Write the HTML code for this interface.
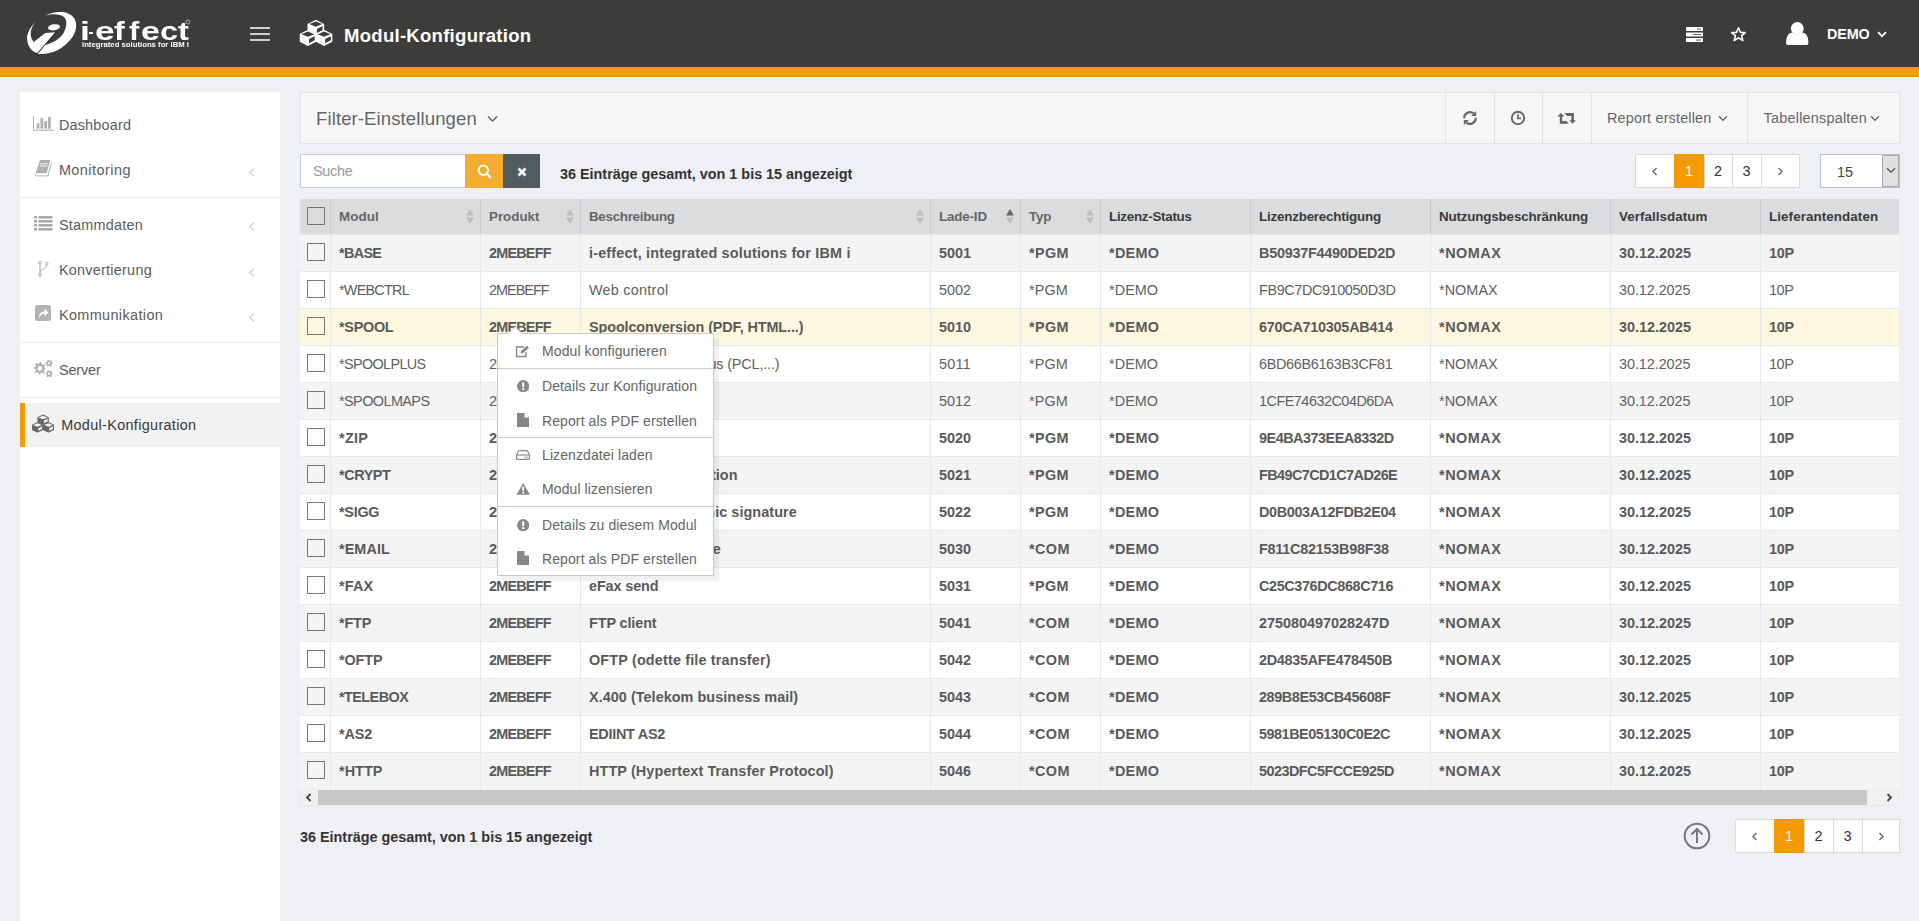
<!DOCTYPE html><html><head><meta charset="utf-8"><title>Modul-Konfiguration</title><style>
*{box-sizing:border-box;margin:0;padding:0}
html,body{width:1919px;height:921px;overflow:hidden;background:#eff0f3;font-family:"Liberation Sans",sans-serif;color:#555}
.t{position:absolute;white-space:nowrap}
.r{position:absolute;display:block}
</style></head><body>
<div class="r" style="left:0px;top:0px;width:1919px;height:67px;background:#3c3c3b;"></div>
<div class="r" style="left:0px;top:67px;width:1919px;height:10px;background:#f59b00;"></div>
<svg class="r" style="left:22px;top:8px;" width="60" height="50" viewBox="0 0 60 50"><path fill="#fff" d="M13.8 14.1 C 8 19, 4.5 26, 5.2 32 C 5.8 38, 9 42, 13 44.2 L 15.2 45 L 33.1 24.2 L 23.3 25 L 11.7 33.9 C 9 31, 8.4 27, 8.8 24 C 9.4 20, 11 17, 13.8 14.1 Z"/><path fill="#fff" d="M23.3 7.6 C 30 4, 40 3, 46 5.5 C 52 8, 55 13, 54 20 C 53 28, 46 36, 36 42 C 29 45.5, 20 46.5, 15.8 46 L 23.3 36.9 C 30 35.5, 38 31, 41.5 25 C 45 19, 45.5 12, 42 9 C 38 5.5, 30 5.5, 23.3 7.6 Z"/><ellipse fill="#fff" cx="32" cy="19.3" rx="6" ry="3" transform="rotate(-8 32 19.3)"/></svg>
<div class="t" style="left:79.9px;top:19px;font-size:25px;line-height:25px;font-weight:bold;color:#fff;transform-origin:0 0;transform:scaleX(1.43)">i</div>
<div class="t" style="left:95.1px;top:19px;font-size:25px;line-height:25px;font-weight:bold;color:#fff;transform-origin:0 0;transform:scaleX(1.41)">e</div>
<div class="t" style="left:114.1px;top:19px;font-size:25px;line-height:25px;font-weight:bold;color:#fff;transform-origin:0 0;transform:scaleX(1.3)">f</div>
<div class="t" style="left:129px;top:19px;font-size:25px;line-height:25px;font-weight:bold;color:#fff;transform-origin:0 0;transform:scaleX(1.23)">f</div>
<div class="t" style="left:140.7px;top:19px;font-size:25px;line-height:25px;font-weight:bold;color:#fff;transform-origin:0 0;transform:scaleX(1.36)">e</div>
<div class="t" style="left:159.7px;top:19px;font-size:25px;line-height:25px;font-weight:bold;color:#fff;transform-origin:0 0;transform:scaleX(1.3)">c</div>
<div class="t" style="left:177.9px;top:19px;font-size:25px;line-height:25px;font-weight:bold;color:#fff;transform-origin:0 0;transform:scaleX(1.31)">t</div>
<div class="r" style="left:89px;top:32px;width:4.2px;height:2px;background:#fff;"></div>
<svg class="r" style="left:185px;top:19px;" width="6" height="6" viewBox="0 0 6 6"><circle cx="3" cy="3" r="2" fill="none" stroke="#ddd" stroke-width="0.7"/></svg>
<div class="t" style="left:82px;top:41.50px;font-size:6.5px;line-height:6.5px;font-weight:bold;color:#fff;transform-origin:0 0;transform:scaleX(1.19)">integrated solutions for IBM i</div>
<div class="r" style="left:250px;top:27px;width:20px;height:2px;background:#cfcfcf;"></div>
<div class="r" style="left:250px;top:33px;width:20px;height:2px;background:#cfcfcf;"></div>
<div class="r" style="left:250px;top:39px;width:20px;height:2px;background:#cfcfcf;"></div>
<svg class="r" style="left:296px;top:16px;" width="40" height="34" viewBox="0 0 40 34"><polygon fill="#fff" points="19.80,3.70 28.10,7.90 28.10,15.60 19.80,19.80 11.50,15.60 11.50,7.90"/><polygon fill="#3c3c3b" points="19.80,5.50 26.27,8.10 19.80,10.70 13.33,8.10"/><polygon fill="#3c3c3b" points="20.90,12.94 26.60,10.06 26.60,14.16 20.90,17.04"/><polygon fill="#fff" points="11.90,13.80 20.10,18.00 20.10,25.70 11.90,29.90 3.70,25.70 3.70,18.00"/><polygon fill="#3c3c3b" points="11.90,15.60 18.30,18.20 11.90,20.80 5.50,18.20"/><polygon fill="#3c3c3b" points="13.00,23.04 18.60,20.17 18.60,24.27 13.00,27.14"/><polygon fill="#fff" points="28.10,13.80 36.30,18.00 36.30,25.70 28.10,29.90 19.90,25.70 19.90,18.00"/><polygon fill="#3c3c3b" points="28.10,15.60 34.50,18.20 28.10,20.80 21.70,18.20"/><polygon fill="#3c3c3b" points="29.20,23.04 34.80,20.17 34.80,24.27 29.20,27.14"/></svg>
<div class="t" style="left:344px;top:26.51px;font-size:18.54px;line-height:18.54px;font-weight:700;color:#fff;letter-spacing:0.271px;">Modul-Konfiguration</div>
<svg class="r" style="left:1686px;top:27px;" width="17" height="15" viewBox="0 0 17 15">
<rect x="0" y="0" width="17" height="4" rx="0.6" fill="#fff"/>
<rect x="0" y="5.5" width="17" height="4" rx="0.6" fill="#fff"/>
<rect x="0" y="11" width="17" height="4" rx="0.6" fill="#fff"/>
<rect x="11" y="1.6" width="4" height="0.9" fill="#555"/>
<rect x="7" y="7.1" width="8" height="0.9" fill="#555"/>
<rect x="10" y="12.6" width="5" height="0.9" fill="#555"/>
</svg>
<svg class="r" style="left:1730px;top:26px;" width="17" height="17" viewBox="0 0 24 24"><path fill="none" stroke="#fff" stroke-width="2.2" stroke-linejoin="round" d="M12 2.5 L14.8 9 L21.7 9.3 L16.3 13.7 L18.2 20.6 L12 16.7 L5.8 20.6 L7.7 13.7 L2.3 9.3 L9.2 9 Z"/></svg>
<svg class="r" style="left:1786px;top:21px;" width="23" height="25" viewBox="0 0 23 25">
<circle cx="11.3" cy="7.5" r="6.4" fill="#fff"/>
<path fill="#fff" d="M2 24 C0.2 24 0 22.5 0.2 20 C0.6 15 2.5 12 6.5 11.6 C8 13 9.5 13.6 11.3 13.6 C13.1 13.6 14.6 13 16 11.6 C20 12 22 15 22.3 20 C22.5 22.5 22.3 24 20.5 24 Z"/>
</svg>
<div class="t" style="left:1827px;top:27.09px;font-size:14.42px;line-height:14.42px;font-weight:700;color:#fff;letter-spacing:-0.168px;">DEMO</div>
<svg class="r" style="left:1877px;top:31px;" width="10" height="7" viewBox="0 0 10 7"><path d="M1 1.2 L5 5.2 L9 1.2" fill="none" stroke="#fff" stroke-width="1.8"/></svg>
<div class="r" style="left:20px;top:92px;width:260px;height:829px;background:#fff;"></div>
<div class="t" style="left:58.9px;top:118.09px;font-size:14.42px;line-height:14.42px;font-weight:400;color:#5c5c5c;letter-spacing:0.196px;">Dashboard</div>
<div class="t" style="left:58.9px;top:163.29px;font-size:14.42px;line-height:14.42px;font-weight:400;color:#5c5c5c;letter-spacing:0.473px;">Monitoring</div>
<svg class="r" style="left:248px;top:168.0px;" width="7" height="9" viewBox="0 0 7 9"><path d="M6 0.8 L1.5 4.5 L6 8.2" fill="none" stroke="#d0d0d0" stroke-width="1.2"/></svg>
<div class="t" style="left:58.9px;top:217.59px;font-size:14.42px;line-height:14.42px;font-weight:400;color:#5c5c5c;letter-spacing:0.247px;">Stammdaten</div>
<svg class="r" style="left:248px;top:222.3px;" width="7" height="9" viewBox="0 0 7 9"><path d="M6 0.8 L1.5 4.5 L6 8.2" fill="none" stroke="#d0d0d0" stroke-width="1.2"/></svg>
<div class="t" style="left:58.9px;top:263.29px;font-size:14.42px;line-height:14.42px;font-weight:400;color:#5c5c5c;letter-spacing:0.257px;">Konvertierung</div>
<svg class="r" style="left:248px;top:268.0px;" width="7" height="9" viewBox="0 0 7 9"><path d="M6 0.8 L1.5 4.5 L6 8.2" fill="none" stroke="#d0d0d0" stroke-width="1.2"/></svg>
<div class="t" style="left:58.9px;top:307.79px;font-size:14.42px;line-height:14.42px;font-weight:400;color:#5c5c5c;letter-spacing:0.385px;">Kommunikation</div>
<svg class="r" style="left:248px;top:312.5px;" width="7" height="9" viewBox="0 0 7 9"><path d="M6 0.8 L1.5 4.5 L6 8.2" fill="none" stroke="#d0d0d0" stroke-width="1.2"/></svg>
<div class="t" style="left:58.9px;top:362.79px;font-size:14.42px;line-height:14.42px;font-weight:400;color:#5c5c5c;letter-spacing:-0.099px;">Server</div>
<div class="r" style="left:20px;top:197px;width:260px;height:1px;background:#ebebeb;"></div>
<div class="r" style="left:20px;top:342px;width:260px;height:1px;background:#ebebeb;"></div>
<div class="r" style="left:20px;top:397px;width:260px;height:1px;background:#ebebeb;"></div>
<div class="r" style="left:20px;top:403px;width:260px;height:44px;background:#f2f2f2;"></div>
<div class="r" style="left:20px;top:403px;width:5px;height:44px;background:#f59b00;"></div>
<div class="t" style="left:61.2px;top:417.79px;font-size:14.42px;line-height:14.42px;font-weight:400;color:#383838;letter-spacing:0.332px;">Modul-Konfiguration</div>
<svg class="r" style="left:28px;top:110px;" width="30" height="25" viewBox="0 0 30 25"><g fill="#b0b0b0"><rect x="5" y="6" width="1" height="14.6"/><rect x="5" y="19.6" width="20.8" height="1.1"/><rect x="8.7" y="13.3" width="2.7" height="5.3"/><rect x="12.5" y="8" width="2.7" height="10.6"/><rect x="16.3" y="11" width="2.7" height="7.6"/><rect x="20.1" y="7" width="2.7" height="11.6"/></g></svg>
<svg class="r" style="left:28px;top:155px;" width="30" height="25" viewBox="0 0 30 25"><path d="M11.6 5.9 Q11.9 5.1 12.8 5.1 H21.4 Q22.3 5.1 22 6 L18.9 17.5 Q18.6 18.3 17.7 18.3 H8.6 Q7.7 18.3 7.9 17.5 Z" fill="#b0b0b0"/><path d="M12.2 8.8 H19.8 M11.8 11 H19.2" stroke="#fff" stroke-width="0.9"/><path d="M23.4 8.2 L20 20.3 Q19.8 20.9 19.1 20.9 H8.4 Q7.2 20.9 7.3 19.6 Q7.4 18.8 8.3 18.8" fill="none" stroke="#b0b0b0" stroke-width="1"/></svg>
<svg class="r" style="left:34px;top:215.6px;" width="19" height="15" viewBox="0 0 19 15">
<rect x="0" y="0" width="3" height="2.6" fill="#aaa"/><rect x="4.5" y="0" width="14" height="2.6" fill="#aaa"/>
<rect x="0" y="4" width="3" height="2.6" fill="#aaa"/><rect x="4.5" y="4" width="14" height="2.6" fill="#aaa"/>
<rect x="0" y="8" width="3" height="2.6" fill="#aaa"/><rect x="4.5" y="8" width="14" height="2.6" fill="#aaa"/>
<rect x="0" y="12" width="3" height="2.6" fill="#aaa"/><rect x="4.5" y="12" width="14" height="2.6" fill="#aaa"/>
</svg>
<svg class="r" style="left:36px;top:260px;" width="14" height="17" viewBox="0 0 14 17">
<circle cx="4" cy="2.6" r="1.4" fill="none" stroke="#aaa" stroke-width="1"/>
<circle cx="10.6" cy="3.7" r="1.4" fill="none" stroke="#aaa" stroke-width="1"/>
<circle cx="4" cy="15" r="1.4" fill="none" stroke="#aaa" stroke-width="1"/>
<path d="M4 4 V13.6 M10.6 5.1 C10.6 9 4.5 9 4 12" fill="none" stroke="#aaa" stroke-width="1"/>
</svg>
<svg class="r" style="left:35px;top:305px;" width="16" height="16" viewBox="0 0 16 16">
<rect x="0" y="0" width="16" height="16" rx="2.5" fill="#b4b4b4"/>
<path d="M4.2 13.2 C3.6 9 5.6 6.6 9.6 6.4 V3.8 L13.4 7.6 L9.6 11.4 V8.8 C7 8.8 5.2 10.2 4.2 13.2 Z" fill="#fff"/>
</svg>
<svg class="r" style="left:28px;top:355px;" width="30" height="30" viewBox="0 0 30 30"><circle cx="11.9" cy="13.4" r="3.55" fill="none" stroke="#b0b0b0" stroke-width="2.50"/><circle cx="11.9" cy="13.4" r="5.40" fill="none" stroke="#b0b0b0" stroke-width="2.00" stroke-dasharray="1.70 2.54" stroke-dashoffset="0.85"/><circle cx="21.2" cy="8.3" r="1.95" fill="none" stroke="#b0b0b0" stroke-width="1.70"/><circle cx="21.2" cy="8.3" r="3.10" fill="none" stroke="#b0b0b0" stroke-width="1.40" stroke-dasharray="1.20 2.05" stroke-dashoffset="0.60"/><circle cx="21.2" cy="18.7" r="1.95" fill="none" stroke="#b0b0b0" stroke-width="1.70"/><circle cx="21.2" cy="18.7" r="3.10" fill="none" stroke="#b0b0b0" stroke-width="1.40" stroke-dasharray="1.20 2.05" stroke-dashoffset="0.60"/></svg>
<svg class="r" style="left:28px;top:408px;" width="32" height="32" viewBox="0 0 32 32"><polygon fill="#686868" points="15.10,6.40 20.80,9.20 20.80,14.30 15.10,17.10 9.40,14.30 9.40,9.20"/><polygon fill="#f2f2f2" points="15.10,7.66 19.55,9.40 15.10,11.14 10.65,9.40"/><polygon fill="#f2f2f2" points="15.90,12.61 19.80,10.69 19.80,13.29 15.90,15.21"/><polygon fill="#686868" points="9.50,14.00 15.00,16.80 15.00,21.90 9.50,24.70 4.00,21.90 4.00,16.80"/><polygon fill="#f2f2f2" points="9.50,15.26 13.79,17.00 9.50,18.74 5.21,17.00"/><polygon fill="#f2f2f2" points="10.30,20.19 14.00,18.31 14.00,20.91 10.30,22.79"/><polygon fill="#686868" points="20.50,14.00 26.00,16.80 26.00,21.90 20.50,24.70 15.00,21.90 15.00,16.80"/><polygon fill="#f2f2f2" points="20.50,15.26 24.79,17.00 20.50,18.74 16.21,17.00"/><polygon fill="#f2f2f2" points="21.30,20.19 25.00,18.31 25.00,20.91 21.30,22.79"/></svg>
<div class="r" style="left:300px;top:92px;width:1600px;height:52px;background:#f7f7f7;border:1px solid #e4e4e4"></div>
<div class="t" style="left:316px;top:109.81px;font-size:18.54px;line-height:18.54px;font-weight:400;color:#666;letter-spacing:0.110px;">Filter-Einstellungen</div>
<svg class="r" style="left:487px;top:115px;" width="11" height="8" viewBox="0 0 11 8"><path d="M1 1.5 L5.5 6 L10 1.5" fill="none" stroke="#666" stroke-width="1.5"/></svg>
<div class="r" style="left:1445px;top:92px;width:1px;height:52px;background:#e4e4e4;"></div>
<div class="r" style="left:1494px;top:92px;width:1px;height:52px;background:#e4e4e4;"></div>
<div class="r" style="left:1542px;top:92px;width:1px;height:52px;background:#e4e4e4;"></div>
<div class="r" style="left:1591px;top:92px;width:1px;height:52px;background:#e4e4e4;"></div>
<div class="r" style="left:1747px;top:92px;width:1px;height:52px;background:#e4e4e4;"></div>
<svg class="r" style="left:1458px;top:106px;" width="24" height="24" viewBox="0 0 24 24"><path d="M6.2 12.2 A5.8 5.8 0 0 1 15.6 7.4" fill="none" stroke="#666" stroke-width="2.1"/><path d="M18.2 4.9 V10 H13.1 Z" fill="#666"/><path d="M17.8 11.8 A5.8 5.8 0 0 1 8.4 16.6" fill="none" stroke="#666" stroke-width="2.1"/><path d="M5.8 14 H10.9 L5.8 19.1 Z" fill="#666"/></svg>
<svg class="r" style="left:1510px;top:110px;" width="16" height="16" viewBox="0 0 16 16">
<circle cx="8" cy="8" r="6.2" fill="none" stroke="#666" stroke-width="1.9"/>
<path d="M8 4.2 V8.4 H11" fill="none" stroke="#666" stroke-width="1.7"/>
</svg>
<svg class="r" style="left:1552px;top:106px;" width="30" height="24" viewBox="0 0 30 24"><path d="M5.2 10.4 L8.9 7 L12.5 10.4 H10.2 V15.1 H14.3 L16.9 17.7 H7.8 V10.4 Z" fill="#666"/><path d="M12.2 7 H21.9 V14.3 H24 L20.6 17.7 L17.2 14.3 H19.3 V9.9 H15.1 Z" fill="#666"/></svg>
<div class="t" style="left:1607px;top:111.09px;font-size:14.42px;line-height:14.42px;font-weight:400;color:#666;letter-spacing:0.173px;">Report erstellen</div>
<svg class="r" style="left:1718px;top:115px;" width="10" height="7" viewBox="0 0 10 7"><path d="M1 1.2 L5 5.2 L9 1.2" fill="none" stroke="#666" stroke-width="1.4"/></svg>
<div class="t" style="left:1763.6px;top:111.09px;font-size:14.42px;line-height:14.42px;font-weight:400;color:#666;letter-spacing:0.220px;">Tabellenspalten</div>
<svg class="r" style="left:1870px;top:115px;" width="10" height="7" viewBox="0 0 10 7"><path d="M1 1.2 L5 5.2 L9 1.2" fill="none" stroke="#666" stroke-width="1.4"/></svg>
<div class="r" style="left:300px;top:154px;width:166px;height:34px;background:#fff;border:1px solid #c6cddc"></div>
<div class="t" style="left:313px;top:164.04px;font-size:14.42px;line-height:14.42px;font-weight:400;color:#999;letter-spacing:-0.287px;">Suche</div>
<div class="r" style="left:465px;top:154px;width:38px;height:34px;background:#f5ad31;"></div>
<svg class="r" style="left:477px;top:164px;" width="16" height="16" viewBox="0 0 16 16"><circle cx="6.3" cy="6.3" r="4.7" fill="none" stroke="#fff" stroke-width="2"/><path d="M9.8 9.8 L13.3 13.3" stroke="#fff" stroke-width="2.4" stroke-linecap="round"/></svg>
<div class="r" style="left:503px;top:154px;width:37px;height:34px;background:#505b62;"></div>
<svg class="r" style="left:516.5px;top:166.5px;" width="10" height="10" viewBox="0 0 10 10"><path d="M1.5 1.5 L8.5 8.5 M8.5 1.5 L1.5 8.5" stroke="#fff" stroke-width="2.6"/></svg>
<div class="t" style="left:560px;top:166.79px;font-size:14.42px;line-height:14.42px;font-weight:700;color:#333;letter-spacing:-0.015px;">36 Einträge gesamt, von 1 bis 15 angezeigt</div>
<div class="r" style="left:1635px;top:154px;width:165px;height:34px;background:#fff;border:1px solid #dadada"></div>
<svg class="r" style="left:1651px;top:167px;" width="7" height="9" viewBox="0 0 7 9"><path d="M5.5 1 L2 4.5 L5.5 8" fill="none" stroke="#606060" stroke-width="1.25"/></svg>
<div class="r" style="left:1674px;top:154px;width:1px;height:34px;background:#dadada;"></div>
<div class="r" style="left:1674px;top:154px;width:30px;height:34px;background:#f59b00;"></div>
<div class="t" style="left:1674px;width:30px;text-align:center;top:164.23px;font-size:14.5px;line-height:14.5px;color:#fff">1</div>
<div class="r" style="left:1704px;top:154px;width:1px;height:34px;background:#dadada;"></div>
<div class="t" style="left:1704px;width:28px;text-align:center;top:164.23px;font-size:14.5px;line-height:14.5px;color:#333">2</div>
<div class="r" style="left:1732px;top:154px;width:1px;height:34px;background:#dadada;"></div>
<div class="t" style="left:1732px;width:29px;text-align:center;top:164.23px;font-size:14.5px;line-height:14.5px;color:#333">3</div>
<div class="r" style="left:1761px;top:154px;width:1px;height:34px;background:#dadada;"></div>
<svg class="r" style="left:1777px;top:167px;" width="7" height="9" viewBox="0 0 7 9"><path d="M1.5 1 L5 4.5 L1.5 8" fill="none" stroke="#606060" stroke-width="1.25"/></svg>
<div class="r" style="left:1820px;top:154px;width:80px;height:34px;background:#fff;border:1px solid #b9c1d3"></div>
<div class="r" style="left:1882px;top:155px;width:17px;height:32px;background:#e0e0e0;border:1px solid #a9a9a9"></div>
<svg class="r" style="left:1886px;top:167px;" width="10" height="7" viewBox="0 0 10 7"><path d="M1 1.2 L5 5.2 L9 1.2" fill="none" stroke="#555" stroke-width="1.3"/></svg>
<div class="t" style="left:1837px;top:164.79px;font-size:14.42px;line-height:14.42px;font-weight:400;color:#444;letter-spacing:-0.008px;">15</div>
<div class="t" style="left:300px;top:829.59px;font-size:14.42px;line-height:14.42px;font-weight:700;color:#333;letter-spacing:-0.015px;">36 Einträge gesamt, von 1 bis 15 angezeigt</div>
<svg class="r" style="left:1683px;top:822px;" width="28" height="28" viewBox="0 0 28 28"><circle cx="14" cy="14" r="12.3" fill="none" stroke="#777" stroke-width="2"/><path d="M14 21 V7.5 M8.5 12.5 L14 7 L19.5 12.5" fill="none" stroke="#777" stroke-width="2"/></svg>
<div class="r" style="left:1735px;top:819px;width:165px;height:34px;background:#fff;border:1px solid #dadada"></div>
<svg class="r" style="left:1751px;top:832px;" width="7" height="9" viewBox="0 0 7 9"><path d="M5.5 1 L2 4.5 L5.5 8" fill="none" stroke="#606060" stroke-width="1.25"/></svg>
<div class="r" style="left:1774px;top:819px;width:1px;height:34px;background:#dadada;"></div>
<div class="r" style="left:1774px;top:819px;width:30px;height:34px;background:#f59b00;"></div>
<div class="t" style="left:1774px;width:30px;text-align:center;top:829.23px;font-size:14.5px;line-height:14.5px;color:#fff">1</div>
<div class="r" style="left:1804px;top:819px;width:1px;height:34px;background:#dadada;"></div>
<div class="t" style="left:1804px;width:29px;text-align:center;top:829.23px;font-size:14.5px;line-height:14.5px;color:#333">2</div>
<div class="r" style="left:1833px;top:819px;width:1px;height:34px;background:#dadada;"></div>
<div class="t" style="left:1833px;width:29px;text-align:center;top:829.23px;font-size:14.5px;line-height:14.5px;color:#333">3</div>
<div class="r" style="left:1862px;top:819px;width:1px;height:34px;background:#dadada;"></div>
<svg class="r" style="left:1878px;top:832px;" width="7" height="9" viewBox="0 0 7 9"><path d="M1.5 1 L5 4.5 L1.5 8" fill="none" stroke="#606060" stroke-width="1.25"/></svg>
<div class="r" style="left:300px;top:199px;width:1599px;height:35px;background:#dbdcde;"></div>
<div class="r" style="left:330px;top:199px;width:1px;height:35px;background:#c9cacd;"></div>
<div class="t" style="left:339px;top:209.67px;font-size:13.39px;line-height:13.39px;font-weight:700;color:#666;letter-spacing:0.103px;">Modul</div>
<svg class="r" style="left:466px;top:209px;" width="8" height="15" viewBox="0 0 8 15"><path d="M4 0 L8 6.5 H0 Z" fill="#bdbdbd"/><path d="M4 15 L8 8.5 H0 Z" fill="#bdbdbd"/></svg>
<div class="r" style="left:480px;top:199px;width:1px;height:35px;background:#c9cacd;"></div>
<div class="t" style="left:489px;top:209.67px;font-size:13.39px;line-height:13.39px;font-weight:700;color:#666;letter-spacing:-0.007px;">Produkt</div>
<svg class="r" style="left:566px;top:209px;" width="8" height="15" viewBox="0 0 8 15"><path d="M4 0 L8 6.5 H0 Z" fill="#bdbdbd"/><path d="M4 15 L8 8.5 H0 Z" fill="#bdbdbd"/></svg>
<div class="r" style="left:580px;top:199px;width:1px;height:35px;background:#c9cacd;"></div>
<div class="t" style="left:589px;top:209.67px;font-size:13.39px;line-height:13.39px;font-weight:700;color:#666;letter-spacing:-0.294px;">Beschreibung</div>
<svg class="r" style="left:916px;top:209px;" width="8" height="15" viewBox="0 0 8 15"><path d="M4 0 L8 6.5 H0 Z" fill="#bdbdbd"/><path d="M4 15 L8 8.5 H0 Z" fill="#bdbdbd"/></svg>
<div class="r" style="left:930px;top:199px;width:1px;height:35px;background:#c9cacd;"></div>
<div class="t" style="left:939px;top:209.67px;font-size:13.39px;line-height:13.39px;font-weight:700;color:#666;letter-spacing:-0.167px;">Lade-ID</div>
<svg class="r" style="left:1006px;top:209px;" width="8" height="15" viewBox="0 0 8 15"><path d="M4 0 L8 6.5 H0 Z" fill="#666"/><path d="M4 15 L8 8.5 H0 Z" fill="#bdbdbd"/></svg>
<div class="r" style="left:1020px;top:199px;width:1px;height:35px;background:#c9cacd;"></div>
<div class="t" style="left:1029px;top:209.67px;font-size:13.39px;line-height:13.39px;font-weight:700;color:#666;letter-spacing:-0.130px;">Typ</div>
<svg class="r" style="left:1086px;top:209px;" width="8" height="15" viewBox="0 0 8 15"><path d="M4 0 L8 6.5 H0 Z" fill="#bdbdbd"/><path d="M4 15 L8 8.5 H0 Z" fill="#bdbdbd"/></svg>
<div class="r" style="left:1100px;top:199px;width:1px;height:35px;background:#c9cacd;"></div>
<div class="t" style="left:1109px;top:209.67px;font-size:13.39px;line-height:13.39px;font-weight:700;color:#3a3a3a;letter-spacing:-0.275px;">Lizenz-Status</div>
<div class="r" style="left:1250px;top:199px;width:1px;height:35px;background:#c9cacd;"></div>
<div class="t" style="left:1259px;top:209.67px;font-size:13.39px;line-height:13.39px;font-weight:700;color:#3a3a3a;letter-spacing:-0.201px;">Lizenzberechtigung</div>
<div class="r" style="left:1430px;top:199px;width:1px;height:35px;background:#c9cacd;"></div>
<div class="t" style="left:1439px;top:209.67px;font-size:13.39px;line-height:13.39px;font-weight:700;color:#3a3a3a;letter-spacing:-0.164px;">Nutzungsbeschränkung</div>
<div class="r" style="left:1610px;top:199px;width:1px;height:35px;background:#c9cacd;"></div>
<div class="t" style="left:1619px;top:209.67px;font-size:13.39px;line-height:13.39px;font-weight:700;color:#3a3a3a;letter-spacing:0.058px;">Verfallsdatum</div>
<div class="r" style="left:1760px;top:199px;width:1px;height:35px;background:#c9cacd;"></div>
<div class="t" style="left:1769px;top:209.67px;font-size:13.39px;line-height:13.39px;font-weight:700;color:#3a3a3a;letter-spacing:0.090px;">Lieferantendaten</div>
<div class="r" style="left:307px;top:207px;width:18px;height:18px;background:transparent;border:1px solid #777;background:#dbdcde"></div>
<div class="r" style="left:300px;top:234px;width:1599px;height:37px;background:#f4f4f4;"></div>
<div class="r" style="left:300px;top:234px;width:1599px;height:1px;background:#e6e9ee;"></div>
<div class="r" style="left:330px;top:234px;width:1px;height:37px;background:#e6e9ee;"></div>
<div class="r" style="left:480px;top:234px;width:1px;height:37px;background:#e6e9ee;"></div>
<div class="r" style="left:580px;top:234px;width:1px;height:37px;background:#e6e9ee;"></div>
<div class="r" style="left:930px;top:234px;width:1px;height:37px;background:#e6e9ee;"></div>
<div class="r" style="left:1020px;top:234px;width:1px;height:37px;background:#e6e9ee;"></div>
<div class="r" style="left:1100px;top:234px;width:1px;height:37px;background:#e6e9ee;"></div>
<div class="r" style="left:1250px;top:234px;width:1px;height:37px;background:#e6e9ee;"></div>
<div class="r" style="left:1430px;top:234px;width:1px;height:37px;background:#e6e9ee;"></div>
<div class="r" style="left:1610px;top:234px;width:1px;height:37px;background:#e6e9ee;"></div>
<div class="r" style="left:1760px;top:234px;width:1px;height:37px;background:#e6e9ee;"></div>
<div class="r" style="left:307px;top:243px;width:18px;height:18px;background:transparent;border:1px solid #777"></div>
<div class="t" style="left:339px;top:245.79px;font-size:14.42px;line-height:14.42px;font-weight:700;color:#5a5a5a;letter-spacing:-0.678px;">*BASE</div>
<div class="t" style="left:489px;top:245.79px;font-size:14.42px;line-height:14.42px;font-weight:700;color:#5a5a5a;letter-spacing:-0.795px;">2MEBEFF</div>
<div class="t" style="left:589px;top:245.79px;font-size:14.42px;line-height:14.42px;font-weight:700;color:#5a5a5a;letter-spacing:0.177px;">i-effect, integrated solutions for IBM i</div>
<div class="t" style="left:939px;top:245.79px;font-size:14.42px;line-height:14.42px;font-weight:700;color:#5a5a5a;letter-spacing:-0.008px;">5001</div>
<div class="t" style="left:1029px;top:245.79px;font-size:14.42px;line-height:14.42px;font-weight:700;color:#5a5a5a;letter-spacing:0.336px;">*PGM</div>
<div class="t" style="left:1109px;top:245.79px;font-size:14.42px;line-height:14.42px;font-weight:700;color:#5a5a5a;letter-spacing:0.272px;">*DEMO</div>
<div class="t" style="left:1259px;top:245.79px;font-size:14.42px;line-height:14.42px;font-weight:700;color:#5a5a5a;letter-spacing:-0.255px;">B50937F4490DED2D</div>
<div class="t" style="left:1439px;top:245.79px;font-size:14.42px;line-height:14.42px;font-weight:700;color:#5a5a5a;letter-spacing:0.521px;">*NOMAX</div>
<div class="t" style="left:1619px;top:245.79px;font-size:14.42px;line-height:14.42px;font-weight:700;color:#5a5a5a;letter-spacing:-0.008px;">30.12.2025</div>
<div class="t" style="left:1769px;top:245.79px;font-size:14.42px;line-height:14.42px;font-weight:700;color:#5a5a5a;letter-spacing:-0.276px;">10P</div>
<div class="r" style="left:300px;top:271px;width:1599px;height:37px;background:#ffffff;"></div>
<div class="r" style="left:300px;top:271px;width:1599px;height:1px;background:#e6e9ee;"></div>
<div class="r" style="left:330px;top:271px;width:1px;height:37px;background:#e6e9ee;"></div>
<div class="r" style="left:480px;top:271px;width:1px;height:37px;background:#e6e9ee;"></div>
<div class="r" style="left:580px;top:271px;width:1px;height:37px;background:#e6e9ee;"></div>
<div class="r" style="left:930px;top:271px;width:1px;height:37px;background:#e6e9ee;"></div>
<div class="r" style="left:1020px;top:271px;width:1px;height:37px;background:#e6e9ee;"></div>
<div class="r" style="left:1100px;top:271px;width:1px;height:37px;background:#e6e9ee;"></div>
<div class="r" style="left:1250px;top:271px;width:1px;height:37px;background:#e6e9ee;"></div>
<div class="r" style="left:1430px;top:271px;width:1px;height:37px;background:#e6e9ee;"></div>
<div class="r" style="left:1610px;top:271px;width:1px;height:37px;background:#e6e9ee;"></div>
<div class="r" style="left:1760px;top:271px;width:1px;height:37px;background:#e6e9ee;"></div>
<div class="r" style="left:307px;top:280px;width:18px;height:18px;background:transparent;border:1px solid #777"></div>
<div class="t" style="left:339px;top:282.79px;font-size:14.42px;line-height:14.42px;font-weight:400;color:#616161;letter-spacing:-0.762px;">*WEBCTRL</div>
<div class="t" style="left:489px;top:282.79px;font-size:14.42px;line-height:14.42px;font-weight:400;color:#616161;letter-spacing:-0.971px;">2MEBEFF</div>
<div class="t" style="left:589px;top:282.79px;font-size:14.42px;line-height:14.42px;font-weight:400;color:#616161;letter-spacing:0.251px;">Web control</div>
<div class="t" style="left:939px;top:282.79px;font-size:14.42px;line-height:14.42px;font-weight:400;color:#616161;letter-spacing:-0.008px;">5002</div>
<div class="t" style="left:1029px;top:282.79px;font-size:14.42px;line-height:14.42px;font-weight:400;color:#616161;letter-spacing:0.121px;">*PGM</div>
<div class="t" style="left:1109px;top:282.79px;font-size:14.42px;line-height:14.42px;font-weight:400;color:#616161;letter-spacing:0.062px;">*DEMO</div>
<div class="t" style="left:1259px;top:282.79px;font-size:14.42px;line-height:14.42px;font-weight:400;color:#616161;letter-spacing:-0.382px;">FB9C7DC910050D3D</div>
<div class="t" style="left:1439px;top:282.79px;font-size:14.42px;line-height:14.42px;font-weight:400;color:#616161;letter-spacing:0.042px;">*NOMAX</div>
<div class="t" style="left:1619px;top:282.79px;font-size:14.42px;line-height:14.42px;font-weight:400;color:#616161;letter-spacing:-0.070px;">30.12.2025</div>
<div class="t" style="left:1769px;top:282.79px;font-size:14.42px;line-height:14.42px;font-weight:400;color:#616161;letter-spacing:-0.401px;">10P</div>
<div class="r" style="left:300px;top:308px;width:1599px;height:37px;background:#fef8e1;"></div>
<div class="r" style="left:300px;top:308px;width:1599px;height:1px;background:#e6e9ee;"></div>
<div class="r" style="left:330px;top:308px;width:1px;height:37px;background:#e6e9ee;"></div>
<div class="r" style="left:480px;top:308px;width:1px;height:37px;background:#e6e9ee;"></div>
<div class="r" style="left:580px;top:308px;width:1px;height:37px;background:#e6e9ee;"></div>
<div class="r" style="left:930px;top:308px;width:1px;height:37px;background:#e6e9ee;"></div>
<div class="r" style="left:1020px;top:308px;width:1px;height:37px;background:#e6e9ee;"></div>
<div class="r" style="left:1100px;top:308px;width:1px;height:37px;background:#e6e9ee;"></div>
<div class="r" style="left:1250px;top:308px;width:1px;height:37px;background:#e6e9ee;"></div>
<div class="r" style="left:1430px;top:308px;width:1px;height:37px;background:#e6e9ee;"></div>
<div class="r" style="left:1610px;top:308px;width:1px;height:37px;background:#e6e9ee;"></div>
<div class="r" style="left:1760px;top:308px;width:1px;height:37px;background:#e6e9ee;"></div>
<div class="r" style="left:307px;top:317px;width:18px;height:18px;background:transparent;border:1px solid #777"></div>
<div class="t" style="left:339px;top:319.79px;font-size:14.42px;line-height:14.42px;font-weight:700;color:#5a5a5a;letter-spacing:-0.286px;">*SPOOL</div>
<div class="t" style="left:489px;top:319.79px;font-size:14.42px;line-height:14.42px;font-weight:700;color:#5a5a5a;letter-spacing:-0.795px;">2MEBEFF</div>
<div class="t" style="left:589px;top:319.79px;font-size:14.42px;line-height:14.42px;font-weight:700;color:#5a5a5a;letter-spacing:-0.109px;">Spoolconversion (PDF, HTML...)</div>
<div class="t" style="left:939px;top:319.79px;font-size:14.42px;line-height:14.42px;font-weight:700;color:#5a5a5a;letter-spacing:-0.008px;">5010</div>
<div class="t" style="left:1029px;top:319.79px;font-size:14.42px;line-height:14.42px;font-weight:700;color:#5a5a5a;letter-spacing:0.336px;">*PGM</div>
<div class="t" style="left:1109px;top:319.79px;font-size:14.42px;line-height:14.42px;font-weight:700;color:#5a5a5a;letter-spacing:0.272px;">*DEMO</div>
<div class="t" style="left:1259px;top:319.79px;font-size:14.42px;line-height:14.42px;font-weight:700;color:#5a5a5a;letter-spacing:-0.253px;">670CA710305AB414</div>
<div class="t" style="left:1439px;top:319.79px;font-size:14.42px;line-height:14.42px;font-weight:700;color:#5a5a5a;letter-spacing:0.521px;">*NOMAX</div>
<div class="t" style="left:1619px;top:319.79px;font-size:14.42px;line-height:14.42px;font-weight:700;color:#5a5a5a;letter-spacing:-0.008px;">30.12.2025</div>
<div class="t" style="left:1769px;top:319.79px;font-size:14.42px;line-height:14.42px;font-weight:700;color:#5a5a5a;letter-spacing:-0.276px;">10P</div>
<div class="r" style="left:300px;top:345px;width:1599px;height:37px;background:#ffffff;"></div>
<div class="r" style="left:300px;top:345px;width:1599px;height:1px;background:#e6e9ee;"></div>
<div class="r" style="left:330px;top:345px;width:1px;height:37px;background:#e6e9ee;"></div>
<div class="r" style="left:480px;top:345px;width:1px;height:37px;background:#e6e9ee;"></div>
<div class="r" style="left:580px;top:345px;width:1px;height:37px;background:#e6e9ee;"></div>
<div class="r" style="left:930px;top:345px;width:1px;height:37px;background:#e6e9ee;"></div>
<div class="r" style="left:1020px;top:345px;width:1px;height:37px;background:#e6e9ee;"></div>
<div class="r" style="left:1100px;top:345px;width:1px;height:37px;background:#e6e9ee;"></div>
<div class="r" style="left:1250px;top:345px;width:1px;height:37px;background:#e6e9ee;"></div>
<div class="r" style="left:1430px;top:345px;width:1px;height:37px;background:#e6e9ee;"></div>
<div class="r" style="left:1610px;top:345px;width:1px;height:37px;background:#e6e9ee;"></div>
<div class="r" style="left:1760px;top:345px;width:1px;height:37px;background:#e6e9ee;"></div>
<div class="r" style="left:307px;top:354px;width:18px;height:18px;background:transparent;border:1px solid #777"></div>
<div class="t" style="left:339px;top:356.79px;font-size:14.42px;line-height:14.42px;font-weight:400;color:#616161;letter-spacing:-0.637px;">*SPOOLPLUS</div>
<div class="t" style="left:489px;top:356.79px;font-size:14.42px;line-height:14.42px;font-weight:400;color:#616161;letter-spacing:-0.971px;">2MEBEFF</div>
<div class="t" style="right:1139.5px;top:356.79px;font-size:14.42px;line-height:14.42px;font-weight:400;color:#616161;letter-spacing:-0.145px;">Spoolconversion plus (PCL,...)</div>
<div class="t" style="left:939px;top:356.79px;font-size:14.42px;line-height:14.42px;font-weight:400;color:#616161;letter-spacing:0.262px;">5011</div>
<div class="t" style="left:1029px;top:356.79px;font-size:14.42px;line-height:14.42px;font-weight:400;color:#616161;letter-spacing:0.121px;">*PGM</div>
<div class="t" style="left:1109px;top:356.79px;font-size:14.42px;line-height:14.42px;font-weight:400;color:#616161;letter-spacing:0.062px;">*DEMO</div>
<div class="t" style="left:1259px;top:356.79px;font-size:14.42px;line-height:14.42px;font-weight:400;color:#616161;letter-spacing:-0.323px;">6BD66B6163B3CF81</div>
<div class="t" style="left:1439px;top:356.79px;font-size:14.42px;line-height:14.42px;font-weight:400;color:#616161;letter-spacing:0.042px;">*NOMAX</div>
<div class="t" style="left:1619px;top:356.79px;font-size:14.42px;line-height:14.42px;font-weight:400;color:#616161;letter-spacing:-0.070px;">30.12.2025</div>
<div class="t" style="left:1769px;top:356.79px;font-size:14.42px;line-height:14.42px;font-weight:400;color:#616161;letter-spacing:-0.401px;">10P</div>
<div class="r" style="left:300px;top:382px;width:1599px;height:37px;background:#f4f4f4;"></div>
<div class="r" style="left:300px;top:382px;width:1599px;height:1px;background:#e6e9ee;"></div>
<div class="r" style="left:330px;top:382px;width:1px;height:37px;background:#e6e9ee;"></div>
<div class="r" style="left:480px;top:382px;width:1px;height:37px;background:#e6e9ee;"></div>
<div class="r" style="left:580px;top:382px;width:1px;height:37px;background:#e6e9ee;"></div>
<div class="r" style="left:930px;top:382px;width:1px;height:37px;background:#e6e9ee;"></div>
<div class="r" style="left:1020px;top:382px;width:1px;height:37px;background:#e6e9ee;"></div>
<div class="r" style="left:1100px;top:382px;width:1px;height:37px;background:#e6e9ee;"></div>
<div class="r" style="left:1250px;top:382px;width:1px;height:37px;background:#e6e9ee;"></div>
<div class="r" style="left:1430px;top:382px;width:1px;height:37px;background:#e6e9ee;"></div>
<div class="r" style="left:1610px;top:382px;width:1px;height:37px;background:#e6e9ee;"></div>
<div class="r" style="left:1760px;top:382px;width:1px;height:37px;background:#e6e9ee;"></div>
<div class="r" style="left:307px;top:391px;width:18px;height:18px;background:transparent;border:1px solid #777"></div>
<div class="t" style="left:339px;top:393.79px;font-size:14.42px;line-height:14.42px;font-weight:400;color:#616161;letter-spacing:-0.562px;">*SPOOLMAPS</div>
<div class="t" style="left:489px;top:393.79px;font-size:14.42px;line-height:14.42px;font-weight:400;color:#616161;letter-spacing:-0.971px;">2MEBEFF</div>
<div class="t" style="left:589px;top:393.79px;font-size:14.42px;line-height:14.42px;font-weight:400;color:#616161;letter-spacing:0.059px;">Spoolmaps</div>
<div class="t" style="left:939px;top:393.79px;font-size:14.42px;line-height:14.42px;font-weight:400;color:#616161;letter-spacing:-0.008px;">5012</div>
<div class="t" style="left:1029px;top:393.79px;font-size:14.42px;line-height:14.42px;font-weight:400;color:#616161;letter-spacing:0.121px;">*PGM</div>
<div class="t" style="left:1109px;top:393.79px;font-size:14.42px;line-height:14.42px;font-weight:400;color:#616161;letter-spacing:0.062px;">*DEMO</div>
<div class="t" style="left:1259px;top:393.79px;font-size:14.42px;line-height:14.42px;font-weight:400;color:#616161;letter-spacing:-0.493px;">1CFE74632C04D6DA</div>
<div class="t" style="left:1439px;top:393.79px;font-size:14.42px;line-height:14.42px;font-weight:400;color:#616161;letter-spacing:0.042px;">*NOMAX</div>
<div class="t" style="left:1619px;top:393.79px;font-size:14.42px;line-height:14.42px;font-weight:400;color:#616161;letter-spacing:-0.070px;">30.12.2025</div>
<div class="t" style="left:1769px;top:393.79px;font-size:14.42px;line-height:14.42px;font-weight:400;color:#616161;letter-spacing:-0.401px;">10P</div>
<div class="r" style="left:300px;top:419px;width:1599px;height:37px;background:#ffffff;"></div>
<div class="r" style="left:300px;top:419px;width:1599px;height:1px;background:#e6e9ee;"></div>
<div class="r" style="left:330px;top:419px;width:1px;height:37px;background:#e6e9ee;"></div>
<div class="r" style="left:480px;top:419px;width:1px;height:37px;background:#e6e9ee;"></div>
<div class="r" style="left:580px;top:419px;width:1px;height:37px;background:#e6e9ee;"></div>
<div class="r" style="left:930px;top:419px;width:1px;height:37px;background:#e6e9ee;"></div>
<div class="r" style="left:1020px;top:419px;width:1px;height:37px;background:#e6e9ee;"></div>
<div class="r" style="left:1100px;top:419px;width:1px;height:37px;background:#e6e9ee;"></div>
<div class="r" style="left:1250px;top:419px;width:1px;height:37px;background:#e6e9ee;"></div>
<div class="r" style="left:1430px;top:419px;width:1px;height:37px;background:#e6e9ee;"></div>
<div class="r" style="left:1610px;top:419px;width:1px;height:37px;background:#e6e9ee;"></div>
<div class="r" style="left:1760px;top:419px;width:1px;height:37px;background:#e6e9ee;"></div>
<div class="r" style="left:307px;top:428px;width:18px;height:18px;background:transparent;border:1px solid #777"></div>
<div class="t" style="left:339px;top:430.79px;font-size:14.42px;line-height:14.42px;font-weight:700;color:#5a5a5a;letter-spacing:0.285px;">*ZIP</div>
<div class="t" style="left:489px;top:430.79px;font-size:14.42px;line-height:14.42px;font-weight:700;color:#5a5a5a;letter-spacing:-0.795px;">2MEBEFF</div>
<div class="t" style="left:589px;top:430.79px;font-size:14.42px;line-height:14.42px;font-weight:700;color:#5a5a5a;letter-spacing:-0.292px;">ZIP</div>
<div class="t" style="left:939px;top:430.79px;font-size:14.42px;line-height:14.42px;font-weight:700;color:#5a5a5a;letter-spacing:-0.008px;">5020</div>
<div class="t" style="left:1029px;top:430.79px;font-size:14.42px;line-height:14.42px;font-weight:700;color:#5a5a5a;letter-spacing:0.336px;">*PGM</div>
<div class="t" style="left:1109px;top:430.79px;font-size:14.42px;line-height:14.42px;font-weight:700;color:#5a5a5a;letter-spacing:0.272px;">*DEMO</div>
<div class="t" style="left:1259px;top:430.79px;font-size:14.42px;line-height:14.42px;font-weight:700;color:#5a5a5a;letter-spacing:-0.494px;">9E4BA373EEA8332D</div>
<div class="t" style="left:1439px;top:430.79px;font-size:14.42px;line-height:14.42px;font-weight:700;color:#5a5a5a;letter-spacing:0.521px;">*NOMAX</div>
<div class="t" style="left:1619px;top:430.79px;font-size:14.42px;line-height:14.42px;font-weight:700;color:#5a5a5a;letter-spacing:-0.008px;">30.12.2025</div>
<div class="t" style="left:1769px;top:430.79px;font-size:14.42px;line-height:14.42px;font-weight:700;color:#5a5a5a;letter-spacing:-0.276px;">10P</div>
<div class="r" style="left:300px;top:456px;width:1599px;height:37px;background:#f4f4f4;"></div>
<div class="r" style="left:300px;top:456px;width:1599px;height:1px;background:#e6e9ee;"></div>
<div class="r" style="left:330px;top:456px;width:1px;height:37px;background:#e6e9ee;"></div>
<div class="r" style="left:480px;top:456px;width:1px;height:37px;background:#e6e9ee;"></div>
<div class="r" style="left:580px;top:456px;width:1px;height:37px;background:#e6e9ee;"></div>
<div class="r" style="left:930px;top:456px;width:1px;height:37px;background:#e6e9ee;"></div>
<div class="r" style="left:1020px;top:456px;width:1px;height:37px;background:#e6e9ee;"></div>
<div class="r" style="left:1100px;top:456px;width:1px;height:37px;background:#e6e9ee;"></div>
<div class="r" style="left:1250px;top:456px;width:1px;height:37px;background:#e6e9ee;"></div>
<div class="r" style="left:1430px;top:456px;width:1px;height:37px;background:#e6e9ee;"></div>
<div class="r" style="left:1610px;top:456px;width:1px;height:37px;background:#e6e9ee;"></div>
<div class="r" style="left:1760px;top:456px;width:1px;height:37px;background:#e6e9ee;"></div>
<div class="r" style="left:307px;top:465px;width:18px;height:18px;background:transparent;border:1px solid #777"></div>
<div class="t" style="left:339px;top:467.79px;font-size:14.42px;line-height:14.42px;font-weight:700;color:#5a5a5a;letter-spacing:-0.411px;">*CRYPT</div>
<div class="t" style="left:489px;top:467.79px;font-size:14.42px;line-height:14.42px;font-weight:700;color:#5a5a5a;letter-spacing:-0.795px;">2MEBEFF</div>
<div class="t" style="right:1181.5px;top:467.79px;font-size:14.42px;line-height:14.42px;font-weight:700;color:#5a5a5a;letter-spacing:0.039px;">Encryption</div>
<div class="t" style="left:939px;top:467.79px;font-size:14.42px;line-height:14.42px;font-weight:700;color:#5a5a5a;letter-spacing:-0.008px;">5021</div>
<div class="t" style="left:1029px;top:467.79px;font-size:14.42px;line-height:14.42px;font-weight:700;color:#5a5a5a;letter-spacing:0.336px;">*PGM</div>
<div class="t" style="left:1109px;top:467.79px;font-size:14.42px;line-height:14.42px;font-weight:700;color:#5a5a5a;letter-spacing:0.272px;">*DEMO</div>
<div class="t" style="left:1259px;top:467.79px;font-size:14.42px;line-height:14.42px;font-weight:700;color:#5a5a5a;letter-spacing:-0.575px;">FB49C7CD1C7AD26E</div>
<div class="t" style="left:1439px;top:467.79px;font-size:14.42px;line-height:14.42px;font-weight:700;color:#5a5a5a;letter-spacing:0.521px;">*NOMAX</div>
<div class="t" style="left:1619px;top:467.79px;font-size:14.42px;line-height:14.42px;font-weight:700;color:#5a5a5a;letter-spacing:-0.008px;">30.12.2025</div>
<div class="t" style="left:1769px;top:467.79px;font-size:14.42px;line-height:14.42px;font-weight:700;color:#5a5a5a;letter-spacing:-0.276px;">10P</div>
<div class="r" style="left:300px;top:493px;width:1599px;height:37px;background:#ffffff;"></div>
<div class="r" style="left:300px;top:493px;width:1599px;height:1px;background:#e6e9ee;"></div>
<div class="r" style="left:330px;top:493px;width:1px;height:37px;background:#e6e9ee;"></div>
<div class="r" style="left:480px;top:493px;width:1px;height:37px;background:#e6e9ee;"></div>
<div class="r" style="left:580px;top:493px;width:1px;height:37px;background:#e6e9ee;"></div>
<div class="r" style="left:930px;top:493px;width:1px;height:37px;background:#e6e9ee;"></div>
<div class="r" style="left:1020px;top:493px;width:1px;height:37px;background:#e6e9ee;"></div>
<div class="r" style="left:1100px;top:493px;width:1px;height:37px;background:#e6e9ee;"></div>
<div class="r" style="left:1250px;top:493px;width:1px;height:37px;background:#e6e9ee;"></div>
<div class="r" style="left:1430px;top:493px;width:1px;height:37px;background:#e6e9ee;"></div>
<div class="r" style="left:1610px;top:493px;width:1px;height:37px;background:#e6e9ee;"></div>
<div class="r" style="left:1760px;top:493px;width:1px;height:37px;background:#e6e9ee;"></div>
<div class="r" style="left:307px;top:502px;width:18px;height:18px;background:transparent;border:1px solid #777"></div>
<div class="t" style="left:339px;top:504.79px;font-size:14.42px;line-height:14.42px;font-weight:700;color:#5a5a5a;letter-spacing:-0.278px;">*SIGG</div>
<div class="t" style="left:489px;top:504.79px;font-size:14.42px;line-height:14.42px;font-weight:700;color:#5a5a5a;letter-spacing:-0.795px;">2MEBEFF</div>
<div class="t" style="right:1122.25px;top:504.79px;font-size:14.42px;line-height:14.42px;font-weight:700;color:#5a5a5a;letter-spacing:0.060px;">Electronic signature</div>
<div class="t" style="left:939px;top:504.79px;font-size:14.42px;line-height:14.42px;font-weight:700;color:#5a5a5a;letter-spacing:-0.008px;">5022</div>
<div class="t" style="left:1029px;top:504.79px;font-size:14.42px;line-height:14.42px;font-weight:700;color:#5a5a5a;letter-spacing:0.336px;">*PGM</div>
<div class="t" style="left:1109px;top:504.79px;font-size:14.42px;line-height:14.42px;font-weight:700;color:#5a5a5a;letter-spacing:0.272px;">*DEMO</div>
<div class="t" style="left:1259px;top:504.79px;font-size:14.42px;line-height:14.42px;font-weight:700;color:#5a5a5a;letter-spacing:-0.360px;">D0B003A12FDB2E04</div>
<div class="t" style="left:1439px;top:504.79px;font-size:14.42px;line-height:14.42px;font-weight:700;color:#5a5a5a;letter-spacing:0.521px;">*NOMAX</div>
<div class="t" style="left:1619px;top:504.79px;font-size:14.42px;line-height:14.42px;font-weight:700;color:#5a5a5a;letter-spacing:-0.008px;">30.12.2025</div>
<div class="t" style="left:1769px;top:504.79px;font-size:14.42px;line-height:14.42px;font-weight:700;color:#5a5a5a;letter-spacing:-0.276px;">10P</div>
<div class="r" style="left:300px;top:530px;width:1599px;height:37px;background:#f4f4f4;"></div>
<div class="r" style="left:300px;top:530px;width:1599px;height:1px;background:#e6e9ee;"></div>
<div class="r" style="left:330px;top:530px;width:1px;height:37px;background:#e6e9ee;"></div>
<div class="r" style="left:480px;top:530px;width:1px;height:37px;background:#e6e9ee;"></div>
<div class="r" style="left:580px;top:530px;width:1px;height:37px;background:#e6e9ee;"></div>
<div class="r" style="left:930px;top:530px;width:1px;height:37px;background:#e6e9ee;"></div>
<div class="r" style="left:1020px;top:530px;width:1px;height:37px;background:#e6e9ee;"></div>
<div class="r" style="left:1100px;top:530px;width:1px;height:37px;background:#e6e9ee;"></div>
<div class="r" style="left:1250px;top:530px;width:1px;height:37px;background:#e6e9ee;"></div>
<div class="r" style="left:1430px;top:530px;width:1px;height:37px;background:#e6e9ee;"></div>
<div class="r" style="left:1610px;top:530px;width:1px;height:37px;background:#e6e9ee;"></div>
<div class="r" style="left:1760px;top:530px;width:1px;height:37px;background:#e6e9ee;"></div>
<div class="r" style="left:307px;top:539px;width:18px;height:18px;background:transparent;border:1px solid #777"></div>
<div class="t" style="left:339px;top:541.79px;font-size:14.42px;line-height:14.42px;font-weight:700;color:#5a5a5a;letter-spacing:0.076px;">*EMAIL</div>
<div class="t" style="left:489px;top:541.79px;font-size:14.42px;line-height:14.42px;font-weight:700;color:#5a5a5a;letter-spacing:-0.795px;">2MEBEFF</div>
<div class="t" style="right:1198.3px;top:541.79px;font-size:14.42px;line-height:14.42px;font-weight:700;color:#5a5a5a;letter-spacing:-0.044px;">Email service</div>
<div class="t" style="left:939px;top:541.79px;font-size:14.42px;line-height:14.42px;font-weight:700;color:#5a5a5a;letter-spacing:-0.008px;">5030</div>
<div class="t" style="left:1029px;top:541.79px;font-size:14.42px;line-height:14.42px;font-weight:700;color:#5a5a5a;letter-spacing:0.422px;">*COM</div>
<div class="t" style="left:1109px;top:541.79px;font-size:14.42px;line-height:14.42px;font-weight:700;color:#5a5a5a;letter-spacing:0.272px;">*DEMO</div>
<div class="t" style="left:1259px;top:541.79px;font-size:14.42px;line-height:14.42px;font-weight:700;color:#5a5a5a;letter-spacing:-0.250px;">F811C82153B98F38</div>
<div class="t" style="left:1439px;top:541.79px;font-size:14.42px;line-height:14.42px;font-weight:700;color:#5a5a5a;letter-spacing:0.521px;">*NOMAX</div>
<div class="t" style="left:1619px;top:541.79px;font-size:14.42px;line-height:14.42px;font-weight:700;color:#5a5a5a;letter-spacing:-0.008px;">30.12.2025</div>
<div class="t" style="left:1769px;top:541.79px;font-size:14.42px;line-height:14.42px;font-weight:700;color:#5a5a5a;letter-spacing:-0.276px;">10P</div>
<div class="r" style="left:300px;top:567px;width:1599px;height:37px;background:#ffffff;"></div>
<div class="r" style="left:300px;top:567px;width:1599px;height:1px;background:#e6e9ee;"></div>
<div class="r" style="left:330px;top:567px;width:1px;height:37px;background:#e6e9ee;"></div>
<div class="r" style="left:480px;top:567px;width:1px;height:37px;background:#e6e9ee;"></div>
<div class="r" style="left:580px;top:567px;width:1px;height:37px;background:#e6e9ee;"></div>
<div class="r" style="left:930px;top:567px;width:1px;height:37px;background:#e6e9ee;"></div>
<div class="r" style="left:1020px;top:567px;width:1px;height:37px;background:#e6e9ee;"></div>
<div class="r" style="left:1100px;top:567px;width:1px;height:37px;background:#e6e9ee;"></div>
<div class="r" style="left:1250px;top:567px;width:1px;height:37px;background:#e6e9ee;"></div>
<div class="r" style="left:1430px;top:567px;width:1px;height:37px;background:#e6e9ee;"></div>
<div class="r" style="left:1610px;top:567px;width:1px;height:37px;background:#e6e9ee;"></div>
<div class="r" style="left:1760px;top:567px;width:1px;height:37px;background:#e6e9ee;"></div>
<div class="r" style="left:307px;top:576px;width:18px;height:18px;background:transparent;border:1px solid #777"></div>
<div class="t" style="left:339px;top:578.79px;font-size:14.42px;line-height:14.42px;font-weight:700;color:#5a5a5a;letter-spacing:0.172px;">*FAX</div>
<div class="t" style="left:489px;top:578.79px;font-size:14.42px;line-height:14.42px;font-weight:700;color:#5a5a5a;letter-spacing:-0.795px;">2MEBEFF</div>
<div class="t" style="left:589px;top:578.79px;font-size:14.42px;line-height:14.42px;font-weight:700;color:#5a5a5a;letter-spacing:-0.115px;">eFax send</div>
<div class="t" style="left:939px;top:578.79px;font-size:14.42px;line-height:14.42px;font-weight:700;color:#5a5a5a;letter-spacing:-0.008px;">5031</div>
<div class="t" style="left:1029px;top:578.79px;font-size:14.42px;line-height:14.42px;font-weight:700;color:#5a5a5a;letter-spacing:0.336px;">*PGM</div>
<div class="t" style="left:1109px;top:578.79px;font-size:14.42px;line-height:14.42px;font-weight:700;color:#5a5a5a;letter-spacing:0.272px;">*DEMO</div>
<div class="t" style="left:1259px;top:578.79px;font-size:14.42px;line-height:14.42px;font-weight:700;color:#5a5a5a;letter-spacing:-0.378px;">C25C376DC868C716</div>
<div class="t" style="left:1439px;top:578.79px;font-size:14.42px;line-height:14.42px;font-weight:700;color:#5a5a5a;letter-spacing:0.521px;">*NOMAX</div>
<div class="t" style="left:1619px;top:578.79px;font-size:14.42px;line-height:14.42px;font-weight:700;color:#5a5a5a;letter-spacing:-0.008px;">30.12.2025</div>
<div class="t" style="left:1769px;top:578.79px;font-size:14.42px;line-height:14.42px;font-weight:700;color:#5a5a5a;letter-spacing:-0.276px;">10P</div>
<div class="r" style="left:300px;top:604px;width:1599px;height:37px;background:#f4f4f4;"></div>
<div class="r" style="left:300px;top:604px;width:1599px;height:1px;background:#e6e9ee;"></div>
<div class="r" style="left:330px;top:604px;width:1px;height:37px;background:#e6e9ee;"></div>
<div class="r" style="left:480px;top:604px;width:1px;height:37px;background:#e6e9ee;"></div>
<div class="r" style="left:580px;top:604px;width:1px;height:37px;background:#e6e9ee;"></div>
<div class="r" style="left:930px;top:604px;width:1px;height:37px;background:#e6e9ee;"></div>
<div class="r" style="left:1020px;top:604px;width:1px;height:37px;background:#e6e9ee;"></div>
<div class="r" style="left:1100px;top:604px;width:1px;height:37px;background:#e6e9ee;"></div>
<div class="r" style="left:1250px;top:604px;width:1px;height:37px;background:#e6e9ee;"></div>
<div class="r" style="left:1430px;top:604px;width:1px;height:37px;background:#e6e9ee;"></div>
<div class="r" style="left:1610px;top:604px;width:1px;height:37px;background:#e6e9ee;"></div>
<div class="r" style="left:1760px;top:604px;width:1px;height:37px;background:#e6e9ee;"></div>
<div class="r" style="left:307px;top:613px;width:18px;height:18px;background:transparent;border:1px solid #777"></div>
<div class="t" style="left:339px;top:615.79px;font-size:14.42px;line-height:14.42px;font-weight:700;color:#5a5a5a;letter-spacing:-0.152px;">*FTP</div>
<div class="t" style="left:489px;top:615.79px;font-size:14.42px;line-height:14.42px;font-weight:700;color:#5a5a5a;letter-spacing:-0.795px;">2MEBEFF</div>
<div class="t" style="left:589px;top:615.79px;font-size:14.42px;line-height:14.42px;font-weight:700;color:#5a5a5a;letter-spacing:-0.106px;">FTP client</div>
<div class="t" style="left:939px;top:615.79px;font-size:14.42px;line-height:14.42px;font-weight:700;color:#5a5a5a;letter-spacing:-0.008px;">5041</div>
<div class="t" style="left:1029px;top:615.79px;font-size:14.42px;line-height:14.42px;font-weight:700;color:#5a5a5a;letter-spacing:0.422px;">*COM</div>
<div class="t" style="left:1109px;top:615.79px;font-size:14.42px;line-height:14.42px;font-weight:700;color:#5a5a5a;letter-spacing:0.272px;">*DEMO</div>
<div class="t" style="left:1259px;top:615.79px;font-size:14.42px;line-height:14.42px;font-weight:700;color:#5a5a5a;letter-spacing:-0.010px;">275080497028247D</div>
<div class="t" style="left:1439px;top:615.79px;font-size:14.42px;line-height:14.42px;font-weight:700;color:#5a5a5a;letter-spacing:0.521px;">*NOMAX</div>
<div class="t" style="left:1619px;top:615.79px;font-size:14.42px;line-height:14.42px;font-weight:700;color:#5a5a5a;letter-spacing:-0.008px;">30.12.2025</div>
<div class="t" style="left:1769px;top:615.79px;font-size:14.42px;line-height:14.42px;font-weight:700;color:#5a5a5a;letter-spacing:-0.276px;">10P</div>
<div class="r" style="left:300px;top:641px;width:1599px;height:37px;background:#ffffff;"></div>
<div class="r" style="left:300px;top:641px;width:1599px;height:1px;background:#e6e9ee;"></div>
<div class="r" style="left:330px;top:641px;width:1px;height:37px;background:#e6e9ee;"></div>
<div class="r" style="left:480px;top:641px;width:1px;height:37px;background:#e6e9ee;"></div>
<div class="r" style="left:580px;top:641px;width:1px;height:37px;background:#e6e9ee;"></div>
<div class="r" style="left:930px;top:641px;width:1px;height:37px;background:#e6e9ee;"></div>
<div class="r" style="left:1020px;top:641px;width:1px;height:37px;background:#e6e9ee;"></div>
<div class="r" style="left:1100px;top:641px;width:1px;height:37px;background:#e6e9ee;"></div>
<div class="r" style="left:1250px;top:641px;width:1px;height:37px;background:#e6e9ee;"></div>
<div class="r" style="left:1430px;top:641px;width:1px;height:37px;background:#e6e9ee;"></div>
<div class="r" style="left:1610px;top:641px;width:1px;height:37px;background:#e6e9ee;"></div>
<div class="r" style="left:1760px;top:641px;width:1px;height:37px;background:#e6e9ee;"></div>
<div class="r" style="left:307px;top:650px;width:18px;height:18px;background:transparent;border:1px solid #777"></div>
<div class="t" style="left:339px;top:652.79px;font-size:14.42px;line-height:14.42px;font-weight:700;color:#5a5a5a;letter-spacing:-0.134px;">*OFTP</div>
<div class="t" style="left:489px;top:652.79px;font-size:14.42px;line-height:14.42px;font-weight:700;color:#5a5a5a;letter-spacing:-0.795px;">2MEBEFF</div>
<div class="t" style="left:589px;top:652.79px;font-size:14.42px;line-height:14.42px;font-weight:700;color:#5a5a5a;letter-spacing:0.157px;">OFTP (odette file transfer)</div>
<div class="t" style="left:939px;top:652.79px;font-size:14.42px;line-height:14.42px;font-weight:700;color:#5a5a5a;letter-spacing:-0.008px;">5042</div>
<div class="t" style="left:1029px;top:652.79px;font-size:14.42px;line-height:14.42px;font-weight:700;color:#5a5a5a;letter-spacing:0.422px;">*COM</div>
<div class="t" style="left:1109px;top:652.79px;font-size:14.42px;line-height:14.42px;font-weight:700;color:#5a5a5a;letter-spacing:0.272px;">*DEMO</div>
<div class="t" style="left:1259px;top:652.79px;font-size:14.42px;line-height:14.42px;font-weight:700;color:#5a5a5a;letter-spacing:-0.297px;">2D4835AFE478450B</div>
<div class="t" style="left:1439px;top:652.79px;font-size:14.42px;line-height:14.42px;font-weight:700;color:#5a5a5a;letter-spacing:0.521px;">*NOMAX</div>
<div class="t" style="left:1619px;top:652.79px;font-size:14.42px;line-height:14.42px;font-weight:700;color:#5a5a5a;letter-spacing:-0.008px;">30.12.2025</div>
<div class="t" style="left:1769px;top:652.79px;font-size:14.42px;line-height:14.42px;font-weight:700;color:#5a5a5a;letter-spacing:-0.276px;">10P</div>
<div class="r" style="left:300px;top:678px;width:1599px;height:37px;background:#f4f4f4;"></div>
<div class="r" style="left:300px;top:678px;width:1599px;height:1px;background:#e6e9ee;"></div>
<div class="r" style="left:330px;top:678px;width:1px;height:37px;background:#e6e9ee;"></div>
<div class="r" style="left:480px;top:678px;width:1px;height:37px;background:#e6e9ee;"></div>
<div class="r" style="left:580px;top:678px;width:1px;height:37px;background:#e6e9ee;"></div>
<div class="r" style="left:930px;top:678px;width:1px;height:37px;background:#e6e9ee;"></div>
<div class="r" style="left:1020px;top:678px;width:1px;height:37px;background:#e6e9ee;"></div>
<div class="r" style="left:1100px;top:678px;width:1px;height:37px;background:#e6e9ee;"></div>
<div class="r" style="left:1250px;top:678px;width:1px;height:37px;background:#e6e9ee;"></div>
<div class="r" style="left:1430px;top:678px;width:1px;height:37px;background:#e6e9ee;"></div>
<div class="r" style="left:1610px;top:678px;width:1px;height:37px;background:#e6e9ee;"></div>
<div class="r" style="left:1760px;top:678px;width:1px;height:37px;background:#e6e9ee;"></div>
<div class="r" style="left:307px;top:687px;width:18px;height:18px;background:transparent;border:1px solid #777"></div>
<div class="t" style="left:339px;top:689.79px;font-size:14.42px;line-height:14.42px;font-weight:700;color:#5a5a5a;letter-spacing:-0.555px;">*TELEBOX</div>
<div class="t" style="left:489px;top:689.79px;font-size:14.42px;line-height:14.42px;font-weight:700;color:#5a5a5a;letter-spacing:-0.795px;">2MEBEFF</div>
<div class="t" style="left:589px;top:689.79px;font-size:14.42px;line-height:14.42px;font-weight:700;color:#5a5a5a;letter-spacing:0.045px;">X.400 (Telekom business mail)</div>
<div class="t" style="left:939px;top:689.79px;font-size:14.42px;line-height:14.42px;font-weight:700;color:#5a5a5a;letter-spacing:-0.008px;">5043</div>
<div class="t" style="left:1029px;top:689.79px;font-size:14.42px;line-height:14.42px;font-weight:700;color:#5a5a5a;letter-spacing:0.422px;">*COM</div>
<div class="t" style="left:1109px;top:689.79px;font-size:14.42px;line-height:14.42px;font-weight:700;color:#5a5a5a;letter-spacing:0.272px;">*DEMO</div>
<div class="t" style="left:1259px;top:689.79px;font-size:14.42px;line-height:14.42px;font-weight:700;color:#5a5a5a;letter-spacing:-0.403px;">289B8E53CB45608F</div>
<div class="t" style="left:1439px;top:689.79px;font-size:14.42px;line-height:14.42px;font-weight:700;color:#5a5a5a;letter-spacing:0.521px;">*NOMAX</div>
<div class="t" style="left:1619px;top:689.79px;font-size:14.42px;line-height:14.42px;font-weight:700;color:#5a5a5a;letter-spacing:-0.008px;">30.12.2025</div>
<div class="t" style="left:1769px;top:689.79px;font-size:14.42px;line-height:14.42px;font-weight:700;color:#5a5a5a;letter-spacing:-0.276px;">10P</div>
<div class="r" style="left:300px;top:715px;width:1599px;height:37px;background:#ffffff;"></div>
<div class="r" style="left:300px;top:715px;width:1599px;height:1px;background:#e6e9ee;"></div>
<div class="r" style="left:330px;top:715px;width:1px;height:37px;background:#e6e9ee;"></div>
<div class="r" style="left:480px;top:715px;width:1px;height:37px;background:#e6e9ee;"></div>
<div class="r" style="left:580px;top:715px;width:1px;height:37px;background:#e6e9ee;"></div>
<div class="r" style="left:930px;top:715px;width:1px;height:37px;background:#e6e9ee;"></div>
<div class="r" style="left:1020px;top:715px;width:1px;height:37px;background:#e6e9ee;"></div>
<div class="r" style="left:1100px;top:715px;width:1px;height:37px;background:#e6e9ee;"></div>
<div class="r" style="left:1250px;top:715px;width:1px;height:37px;background:#e6e9ee;"></div>
<div class="r" style="left:1430px;top:715px;width:1px;height:37px;background:#e6e9ee;"></div>
<div class="r" style="left:1610px;top:715px;width:1px;height:37px;background:#e6e9ee;"></div>
<div class="r" style="left:1760px;top:715px;width:1px;height:37px;background:#e6e9ee;"></div>
<div class="r" style="left:307px;top:724px;width:18px;height:18px;background:transparent;border:1px solid #777"></div>
<div class="t" style="left:339px;top:726.79px;font-size:14.42px;line-height:14.42px;font-weight:700;color:#5a5a5a;letter-spacing:-0.156px;">*AS2</div>
<div class="t" style="left:489px;top:726.79px;font-size:14.42px;line-height:14.42px;font-weight:700;color:#5a5a5a;letter-spacing:-0.795px;">2MEBEFF</div>
<div class="t" style="left:589px;top:726.79px;font-size:14.42px;line-height:14.42px;font-weight:700;color:#5a5a5a;letter-spacing:-0.273px;">EDIINT AS2</div>
<div class="t" style="left:939px;top:726.79px;font-size:14.42px;line-height:14.42px;font-weight:700;color:#5a5a5a;letter-spacing:-0.008px;">5044</div>
<div class="t" style="left:1029px;top:726.79px;font-size:14.42px;line-height:14.42px;font-weight:700;color:#5a5a5a;letter-spacing:0.422px;">*COM</div>
<div class="t" style="left:1109px;top:726.79px;font-size:14.42px;line-height:14.42px;font-weight:700;color:#5a5a5a;letter-spacing:0.272px;">*DEMO</div>
<div class="t" style="left:1259px;top:726.79px;font-size:14.42px;line-height:14.42px;font-weight:700;color:#5a5a5a;letter-spacing:-0.474px;">5981BE05130C0E2C</div>
<div class="t" style="left:1439px;top:726.79px;font-size:14.42px;line-height:14.42px;font-weight:700;color:#5a5a5a;letter-spacing:0.521px;">*NOMAX</div>
<div class="t" style="left:1619px;top:726.79px;font-size:14.42px;line-height:14.42px;font-weight:700;color:#5a5a5a;letter-spacing:-0.008px;">30.12.2025</div>
<div class="t" style="left:1769px;top:726.79px;font-size:14.42px;line-height:14.42px;font-weight:700;color:#5a5a5a;letter-spacing:-0.276px;">10P</div>
<div class="r" style="left:300px;top:752px;width:1599px;height:37px;background:#f4f4f4;"></div>
<div class="r" style="left:300px;top:752px;width:1599px;height:1px;background:#e6e9ee;"></div>
<div class="r" style="left:330px;top:752px;width:1px;height:37px;background:#e6e9ee;"></div>
<div class="r" style="left:480px;top:752px;width:1px;height:37px;background:#e6e9ee;"></div>
<div class="r" style="left:580px;top:752px;width:1px;height:37px;background:#e6e9ee;"></div>
<div class="r" style="left:930px;top:752px;width:1px;height:37px;background:#e6e9ee;"></div>
<div class="r" style="left:1020px;top:752px;width:1px;height:37px;background:#e6e9ee;"></div>
<div class="r" style="left:1100px;top:752px;width:1px;height:37px;background:#e6e9ee;"></div>
<div class="r" style="left:1250px;top:752px;width:1px;height:37px;background:#e6e9ee;"></div>
<div class="r" style="left:1430px;top:752px;width:1px;height:37px;background:#e6e9ee;"></div>
<div class="r" style="left:1610px;top:752px;width:1px;height:37px;background:#e6e9ee;"></div>
<div class="r" style="left:1760px;top:752px;width:1px;height:37px;background:#e6e9ee;"></div>
<div class="r" style="left:307px;top:761px;width:18px;height:18px;background:transparent;border:1px solid #777"></div>
<div class="t" style="left:339px;top:763.79px;font-size:14.42px;line-height:14.42px;font-weight:700;color:#5a5a5a;letter-spacing:0.028px;">*HTTP</div>
<div class="t" style="left:489px;top:763.79px;font-size:14.42px;line-height:14.42px;font-weight:700;color:#5a5a5a;letter-spacing:-0.795px;">2MEBEFF</div>
<div class="t" style="left:589px;top:763.79px;font-size:14.42px;line-height:14.42px;font-weight:700;color:#5a5a5a;letter-spacing:0.116px;">HTTP (Hypertext Transfer Protocol)</div>
<div class="t" style="left:939px;top:763.79px;font-size:14.42px;line-height:14.42px;font-weight:700;color:#5a5a5a;letter-spacing:-0.008px;">5046</div>
<div class="t" style="left:1029px;top:763.79px;font-size:14.42px;line-height:14.42px;font-weight:700;color:#5a5a5a;letter-spacing:0.422px;">*COM</div>
<div class="t" style="left:1109px;top:763.79px;font-size:14.42px;line-height:14.42px;font-weight:700;color:#5a5a5a;letter-spacing:0.272px;">*DEMO</div>
<div class="t" style="left:1259px;top:763.79px;font-size:14.42px;line-height:14.42px;font-weight:700;color:#5a5a5a;letter-spacing:-0.536px;">5023DFC5FCCE925D</div>
<div class="t" style="left:1439px;top:763.79px;font-size:14.42px;line-height:14.42px;font-weight:700;color:#5a5a5a;letter-spacing:0.521px;">*NOMAX</div>
<div class="t" style="left:1619px;top:763.79px;font-size:14.42px;line-height:14.42px;font-weight:700;color:#5a5a5a;letter-spacing:-0.008px;">30.12.2025</div>
<div class="t" style="left:1769px;top:763.79px;font-size:14.42px;line-height:14.42px;font-weight:700;color:#5a5a5a;letter-spacing:-0.276px;">10P</div>
<div class="r" style="left:300px;top:789px;width:1599px;height:17px;background:#f1f1f1;border:1px solid #e6e9ee;border-top:0"></div>
<div class="r" style="left:318px;top:790px;width:1549px;height:15px;background:#c8c8c8;"></div>
<svg class="r" style="left:305px;top:793px;" width="7" height="9" viewBox="0 0 7 9"><path d="M5.5 1 L2 4.5 L5.5 8" fill="none" stroke="#444" stroke-width="1.8"/></svg>
<svg class="r" style="left:1886px;top:793px;" width="7" height="9" viewBox="0 0 7 9"><path d="M1.5 1 L5 4.5 L1.5 8" fill="none" stroke="#444" stroke-width="1.8"/></svg>
<div class="r" style="left:502px;top:338px;width:217px;height:243px;background:rgba(0,0,0,0.06);filter:blur(0.8px)"></div>
<div class="r" style="left:497px;top:333px;width:217px;height:243px;background:#fff;border:1px solid #c8c8c8"></div>
<svg class="r" style="left:507px;top:326px;" width="16" height="9" viewBox="0 0 16 9"><path d="M0.5 8 L8 0.7 L15.5 8" fill="#fff" stroke="#d0d0d0" stroke-width="1"/><rect x="1.5" y="7" width="13" height="2.5" fill="#fff"/></svg>
<div class="r" style="left:497px;top:368px;width:217px;height:1px;background:#ccc;"></div>
<div class="r" style="left:497px;top:437px;width:217px;height:1px;background:#ccc;"></div>
<div class="r" style="left:497px;top:506px;width:217px;height:1px;background:#ccc;"></div>
<div class="t" style="left:542px;top:344.45px;font-size:14px;line-height:14px;color:#666;letter-spacing:0.1px">Modul konfigurieren</div>
<svg class="r" style="left:515px;top:345px;" width="15" height="13" viewBox="0 0 15 13"><path d="M9 2 H1.5 V11.5 H11 V7" fill="none" stroke="#888" stroke-width="1.3"/><path d="M5.5 8.5 L6 6 L12 0.8 L14 2.8 L8 8 Z" fill="#888"/></svg>
<div class="t" style="left:542px;top:379.15px;font-size:14px;line-height:14px;color:#666;letter-spacing:0.1px">Details zur Konfiguration</div>
<svg class="r" style="left:516.9px;top:379.9px;" width="12.4" height="12.4" viewBox="0 0 13 13"><circle cx="6.5" cy="6.5" r="6.4" fill="#888"/><rect x="5.4" y="2.6" width="2.2" height="5" fill="#fff"/><rect x="5.4" y="8.6" width="2.2" height="2" fill="#fff"/></svg>
<div class="t" style="left:542px;top:413.75px;font-size:14px;line-height:14px;color:#666;letter-spacing:0.1px">Report als PDF erstellen</div>
<svg class="r" style="left:517px;top:413px;" width="12" height="14" viewBox="0 0 12 14"><path d="M0 0 H7.5 L12 4.5 V14 H0 Z" fill="#888"/><path d="M7.5 0 V4.5 H12" fill="#fff"/></svg>
<div class="t" style="left:542px;top:448.45px;font-size:14px;line-height:14px;color:#666;letter-spacing:0.1px">Lizenzdatei laden</div>
<svg class="r" style="left:516px;top:450px;" width="14" height="10" viewBox="0 0 14 10"><path d="M3.2 0.6 H10.8 Q11.4 0.6 11.7 1.2 L13.4 5 V8.6 Q13.4 9.4 12.6 9.4 H1.4 Q0.6 9.4 0.6 8.6 V5 L2.3 1.2 Q2.6 0.6 3.2 0.6 Z" fill="none" stroke="#888" stroke-width="1.15"/><path d="M0.6 5 H13.4" stroke="#888" stroke-width="1.1"/><rect x="8.6" y="6.6" width="1.2" height="1.2" fill="#888"/><rect x="10.6" y="6.6" width="1.2" height="1.2" fill="#888"/></svg>
<div class="t" style="left:542px;top:482.45px;font-size:14px;line-height:14px;color:#666;letter-spacing:0.1px">Modul lizensieren</div>
<svg class="r" style="left:515.6px;top:481.8px;" width="14.4" height="13.6" viewBox="0 0 16 14"><path d="M8 0.5 L15.5 13.5 H0.5 Z" fill="#888"/><rect x="7" y="4.5" width="2" height="5" fill="#fff"/><rect x="7" y="10.5" width="2" height="1.8" fill="#fff"/></svg>
<div class="t" style="left:542px;top:517.75px;font-size:14px;line-height:14px;color:#666;letter-spacing:0.1px">Details zu diesem Modul</div>
<svg class="r" style="left:516.9px;top:518.5px;" width="12.4" height="12.4" viewBox="0 0 13 13"><circle cx="6.5" cy="6.5" r="6.4" fill="#888"/><rect x="5.4" y="2.6" width="2.2" height="5" fill="#fff"/><rect x="5.4" y="8.6" width="2.2" height="2" fill="#fff"/></svg>
<div class="t" style="left:542px;top:551.65px;font-size:14px;line-height:14px;color:#666;letter-spacing:0.1px">Report als PDF erstellen</div>
<svg class="r" style="left:517px;top:551px;" width="12" height="14" viewBox="0 0 12 14"><path d="M0 0 H7.5 L12 4.5 V14 H0 Z" fill="#888"/><path d="M7.5 0 V4.5 H12" fill="#fff"/></svg>
</body></html>
